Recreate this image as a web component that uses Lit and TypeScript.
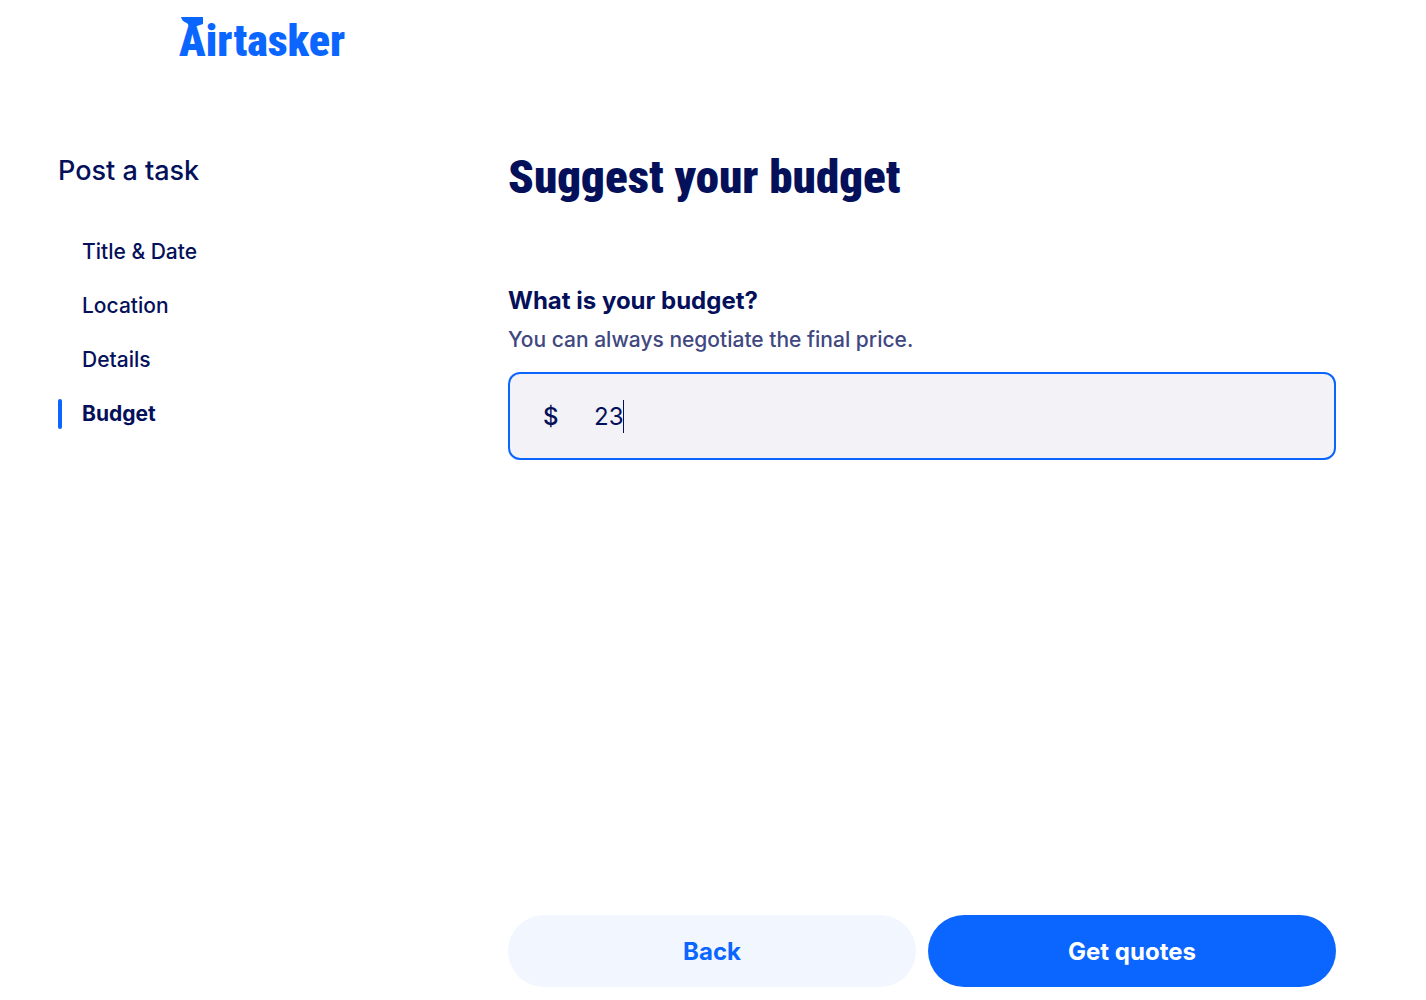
import { LitElement, html, css } from "lit";
import { customElement, state } from "lit/decorators.js";

@customElement("app-root")
export class AppRoot extends LitElement {
  @state() private amount = "23";

  private steps = ["Title & Date", "Location", "Details", "Budget"];
  private current = "Budget";

  static styles = css`
    :host {
      display: flex;
      flex-direction: column;
      min-height: 100vh;
      box-sizing: border-box;
      background: #fff;
      color: #04105a;
      font-family: Inter, "Liberation Sans", sans-serif;
      font-weight: 500;
    }
    header {
      padding: 12px 179px 0;
      height: 60px;
    }
    .logo {
      display: inline-flex;
      color: #0a66ff;
    }
    .logo svg {
      display: block;
      overflow: visible;
      fill: currentColor;
    }
    .wordmark {
      font-family: "Roboto Condensed", Roboto, sans-serif;
      font-size: 44px;
      font-weight: 900;
    }
    .page {
      flex: 1;
      display: grid;
      grid-template-columns: minmax(160px, 450px) minmax(0, 1fr);
      padding: 68px 90px 13px 58px;
    }
    .side-title {
      margin: 12px 0 0;
      font-size: 27px;
      line-height: 38px;
      font-weight: 500;
    }
    ul {
      list-style: none;
      margin: 46px 0 0;
      padding: 0;
      display: grid;
      gap: 22px;
    }
    li {
      display: flex;
      align-items: center;
    }
    li::before {
      content: "";
      width: 4px;
      height: 30px;
      border-radius: 2px;
    }
    li.active::before {
      background: #0a66ff;
    }
    .step {
      padding-left: 20px;
      font-size: 21px;
      line-height: 32px;
      color: inherit;
      text-decoration: none;
    }
    li.active .step {
      font-weight: 700;
    }
    main {
      display: flex;
      flex-direction: column;
    }
    h1 {
      margin: 0;
      font-family: "Roboto Condensed", Roboto, sans-serif;
      font-size: 47px;
      line-height: 74px;
      font-weight: 900;
    }
    .question {
      margin-top: 69px;
      font-size: 24px;
      line-height: 36px;
      font-weight: 700;
    }
    .hint {
      margin: 4px 0 15px;
      font-size: 21px;
      line-height: 34px;
      color: #40487f;
    }
    .field {
      display: flex;
      align-items: center;
      height: 88px;
      box-sizing: border-box;
      padding: 0 33px;
      border: 2px solid #0a66ff;
      border-radius: 12px;
      background: #f3f2f7;
      font-size: 24px;
      cursor: text;
    }
    .currency {
      width: 51px;
    }
    input {
      field-sizing: content;
      min-width: 0;
      padding: 0;
      border: 0;
      outline: 0;
      background: none;
      color: inherit;
      font: inherit;
      font-weight: 400;
      caret-color: transparent;
    }
    .caret {
      width: 1px;
      height: 33px;
      background: #04105a;
    }
    .actions {
      display: grid;
      grid-template-columns: 1fr 1fr;
      gap: 12px;
      margin-top: auto;
    }
    button {
      height: 72px;
      border: 0;
      border-radius: 36px;
      font: inherit;
      font-size: 24px;
      font-weight: 700;
      cursor: pointer;
    }
    .back {
      background: #f2f7ff;
      color: #0a66ff;
    }
    .submit {
      background: #0a66ff;
      color: #fff;
    }
  `;

  private onInput(e: Event) {
    this.amount = (e.target as HTMLInputElement).value;
  }

  render() {
    return html`
      <header>
        <a class="logo" href="#" aria-label="Airtasker">
          <svg width="166" height="48" viewBox="0 0 166 48">
            <path d="M2 5H24V12L18 14H9.500Q9.500 11.500 6.500 10.500Q3 9 2 5Z" />
            <text class="wordmark" x="0" y="44">Airtasker</text>
          </svg>
        </a>
      </header>
      <div class="page">
        <nav aria-label="Post a task">
          <h2 class="side-title">Post a task</h2>
          <ul>
            ${this.steps.map(
              (s) => html`<li class=${s === this.current ? "active" : ""}>
                <a class="step" href="#">${s}</a>
              </li>`
            )}
          </ul>
        </nav>
        <main>
          <h1>Suggest your budget</h1>
          <label class="question" for="budget">What is your budget?</label>
          <p class="hint" id="hint">You can always negotiate the final price.</p>
          <label class="field" for="budget">
            <span class="currency">$</span>
            <input
              id="budget"
              type="text"
              inputmode="numeric"
              aria-describedby="hint"
              .value=${this.amount}
              @input=${this.onInput}
            />
            <span class="caret"></span>
          </label>
          <div class="actions">
            <button class="back" type="button">Back</button>
            <button class="submit" type="button">Get quotes</button>
          </div>
        </main>
      </div>
    `;
  }
}
